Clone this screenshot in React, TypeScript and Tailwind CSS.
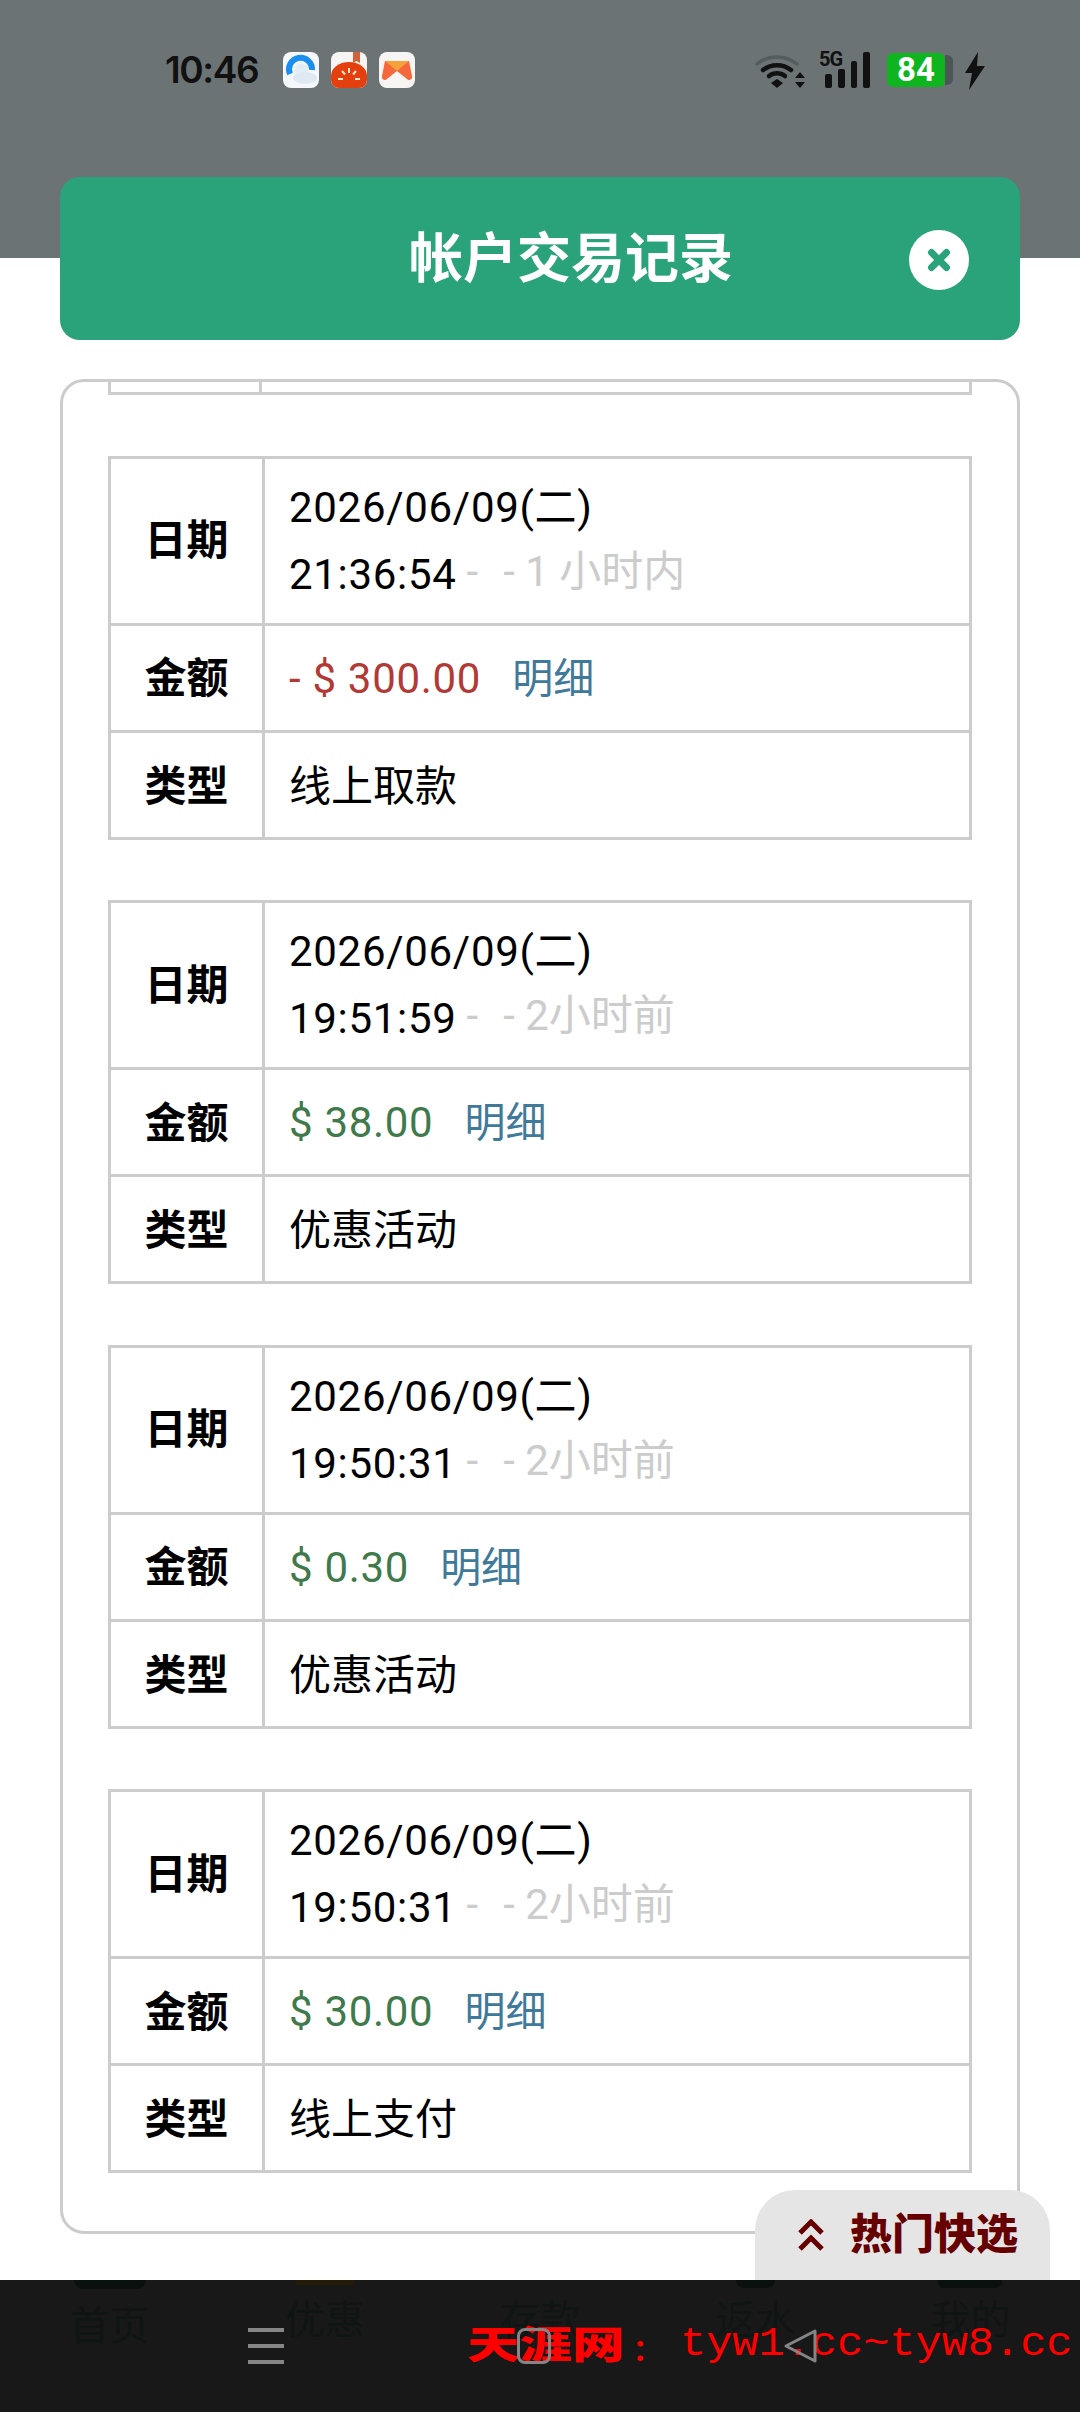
import React from 'react';
import { X } from 'lucide-react';

const FONT = "font-['Roboto','Noto_Sans_CJK_SC',sans-serif]";

type Record = { date: string; time: string; ago: string; amount: string; kind: string; tone: string };

const records: Record[] = [
  { date: '2026/06/09(二)', time: '21:36:54', ago: '- 1 小时内', amount: '- $ 300.00', kind: '线上取款', tone: 'text-[#b23a36]' },
  { date: '2026/06/09(二)', time: '19:51:59', ago: '- 2小时前', amount: '$ 38.00', kind: '优惠活动', tone: 'text-[#3f7a4c]' },
  { date: '2026/06/09(二)', time: '19:50:31', ago: '- 2小时前', amount: '$ 0.30', kind: '优惠活动', tone: 'text-[#3f7a4c]' },
  { date: '2026/06/09(二)', time: '19:50:31', ago: '- 2小时前', amount: '$ 30.00', kind: '线上支付', tone: 'text-[#3f7a4c]' },
];

const thClass = 'border-[3px] border-[#ccc] w-[154px] text-center font-bold text-[42px] text-black p-0';
const tdClass = 'border-[3px] border-[#ccc] pl-[24px] text-[42px] text-black p-0 text-left font-normal';

const RecordTable: React.FC<{ record: Record }> = ({ record }) => (
  <table className="w-full border-collapse table-fixed">
    <tbody>
      <tr className="h-[167px]">
        <th className={thClass}>日期</th>
        <td className={tdClass}>
          <div className="leading-[67px] tracking-[0.7px]">{record.date}</div>
          <div className="leading-[67px] tracking-[0.7px]">
            {record.time}
            <span className="relative -top-[3px] text-[#ccc] tracking-normal">
              <span className="ml-[10px]">-</span>
              <span className="ml-[25px]">{record.ago}</span>
            </span>
          </div>
        </td>
      </tr>
      <tr className="h-[107px]">
        <th className={`${thClass} pt-[2px]`}>金额</th>
        <td className={`${tdClass} pt-[2px]`}>
          <span className={`tracking-[0.7px] ${record.tone}`}>{record.amount}</span>
          <span className="ml-[31px] text-[41px] text-[#3f7a9b]">明细</span>
        </td>
      </tr>
      <tr className="h-[107px]">
        <th className={`${thClass} pt-[3px]`}>类型</th>
        <td className={`${tdClass} pt-[3px]`}>{record.kind}</td>
      </tr>
    </tbody>
  </table>
);

const StatusBar = () => (
  <div className="h-[177px] pt-[52px] pl-[165px] flex items-start">
    <span className="w-[118px] h-[36px] leading-[36px] text-[37px] font-semibold text-[#111] font-['Inter',sans-serif] tracking-[-1.400px]">10:46</span>
    <div className="flex gap-[12px]">
      <svg width="36" height="36" viewBox="0 0 36 36">
        <rect width="36" height="36" rx="8" fill="#f4f8fc" />
        <path d="M7 22a11.500 11.500 0 1 1 22-4" fill="none" stroke="#1b8ff0" strokeWidth="6" />
        <circle cx="18" cy="18" r="7" fill="#e3edf5" />
        <ellipse cx="22" cy="26" rx="12" ry="6" fill="#dfe9f2" />
      </svg>
      <svg width="36" height="36" viewBox="0 0 36 36">
        <rect width="36" height="36" rx="8" fill="#f7f5f3" />
        <path d="M0 24a18 14 0 0 1 36 0v4a8 8 0 0 1-8 8H8a8 8 0 0 1-8-8z" fill="#e4400f" />
        <path d="M22 0h7v11l-3.500-2-3.500 2z" fill="#d0633a" />
        <path d="M18 16v5M11 19l3 3.500M25 19l-3 3.500M7 27h5M24 27h5" stroke="#ffe9c8" strokeWidth="2" />
      </svg>
      <svg width="36" height="36" viewBox="0 0 36 36">
        <rect width="36" height="36" rx="8" fill="#f7f5f3" />
        <path d="M6 9h24l3 15a3 3 0 0 1-5 3l-10-8-10 8a3 3 0 0 1-5-3z" fill="#f4683c" />
        <path d="M6 9h24l-12 10z" fill="#f7a13a" />
      </svg>
    </div>
    <div className="ml-auto mr-[95px] flex items-start">
      <svg width="50" height="36" viewBox="0 0 50 36" fill="none" strokeLinecap="round">
        <path d="M2 12a32 32 0 0 1 40 0" stroke="#555c5d" strokeWidth="3.500" />
        <path d="M8 18a23 23 0 0 1 28 0" stroke="#111" strokeWidth="4.500" />
        <path d="M14 24a13 13 0 0 1 16 0" stroke="#111" strokeWidth="4.500" />
        <path d="M22 36l-6-5 6-4 6 4z" fill="#111" stroke="none" />
        <path d="M45 20l5 6H40zM45 36l5-6H40z" fill="#111" stroke="none" />
      </svg>
      <div className="relative ml-[14px] w-[51px] h-[36px] flex items-end gap-[6px] pl-[6px]">
        <span className="absolute left-0 -top-[3px] text-[20px] leading-[20px] font-bold text-[#111] font-['Roboto',sans-serif] tracking-[-1px]">5G</span>
        <span className="w-[7px] h-[14px] rounded-[2px] bg-[#111]" />
        <span className="w-[7px] h-[19px] rounded-[2px] bg-[#111]" />
        <span className="w-[7px] h-[27px] rounded-[2px] bg-[#111]" />
        <span className="w-[7px] h-[36px] rounded-[2px] bg-[#111]" />
      </div>
      <div className="ml-[17px] flex items-center h-[36px]">
        <div className="w-[58px] h-[34px] rounded-[6px] bg-[#0eb51e] text-white text-[33px] leading-[34px] font-bold text-center font-['Roboto',sans-serif]">84</div>
        <div className="w-[8px] h-[30px] rounded-r-[6px] bg-[#4e5556]" />
      </div>
      <svg className="ml-[12px]" width="20" height="38" viewBox="0 0 20 38">
        <path d="M13 0L0 21h7L4 38 20 14h-8z" fill="#111" />
      </svg>
    </div>
  </div>
);

const tabs = [
  { label: '首页', top: 'mt-[8px]', icon: 'w-[72px] h-[9px] rounded-b-[12px] bg-[#0a100e]' },
  { label: '优惠', top: 'mt-[6px]', icon: 'w-[58px] h-[5px] bg-[#241a08]' },
  { label: '存款', top: 'mt-[11px]', icon: 'w-[40px] h-0' },
  { label: '返水', top: 'mt-[3px]', icon: 'w-[39px] h-[8px] rounded-b-[18px] bg-[#0a100e]' },
  { label: '我的', top: 'mt-[3px]', icon: 'w-[64px] h-[8px] rounded-b-[6px] bg-[#0a100e]' },
];

const BottomBar = () => (
  <div className="relative z-10 h-[132px] bg-[#181818] overflow-hidden">
    <div className="grid grid-cols-5 px-[2px]">
      {tabs.map((tab) => (
        <div key={tab.label} className="flex flex-col items-center">
          <span className={`block ${tab.icon}`} />
          <span className={`text-[40px] text-[#0f1513] ${tab.top}`}>{tab.label}</span>
        </div>
      ))}
    </div>
    {/* red banner and soft keys lie over the faded tab labels */}
    <div className="absolute inset-x-0 top-[48px] h-[36px]">
      <div className="absolute left-[467px] -top-[7px] whitespace-nowrap flex items-center h-[48px] text-[#f00]">
        <div className="w-[168px]">
          <span className="inline-block origin-left scale-x-[1.38] text-[38px] font-black leading-[48px]">天涯网</span>
        </div>
        <span className="w-[45px] text-[36px] leading-[48px] font-bold pt-[8px]">:</span>
        <span className="inline-block origin-left scale-x-[1.09] text-[40px] leading-[48px] font-['Liberation_Mono',monospace]">tyw1.cc~tyw8.cc</span>
      </div>
      <div className="absolute left-[248px] top-0 w-[36px] h-[36px] flex flex-col justify-between">
        <span className="h-[4px] bg-[#858585]" />
        <span className="h-[4px] bg-[#858585]" />
        <span className="h-[4px] bg-[#858585]" />
      </div>
      <div className="absolute left-[517px] top-0 w-[34px] h-[36px] rounded-[8px] border-[3px] border-[#858585]" />
      <svg className="absolute left-[783px] top-0" width="34" height="36" viewBox="0 0 34 36" fill="none">
        <path d="M32 3v30L3 18z" stroke="#858585" strokeWidth="3" strokeLinejoin="round" />
      </svg>
    </div>
  </div>
);

const App: React.FC = () => (
  <div className={`relative w-[1080px] h-[2412px] bg-white overflow-hidden flex flex-col ${FONT}`}>
    <div className="absolute inset-x-0 top-0 h-[258px] bg-[#6b7374]" />
    <div className="relative flex-1 flex flex-col min-h-0">
      <StatusBar />
      <div className="mx-[60px] h-[163px] rounded-[20px] bg-[#2aa37b] flex items-center pl-[349px] pt-[2px]">
        <h1 className="text-[54px] font-semibold text-white leading-none">帐户交易记录</h1>
        <button className="ml-auto mr-[51px] w-[60px] h-[60px] rounded-full bg-white flex items-center justify-center">
          <X size={30} strokeWidth={5.500} color="#2aa37b" />
        </button>
      </div>
      <div className="mx-[60px] mt-[39px] h-[1855px] rounded-[24px] border-[3px] border-[#ccc] overflow-hidden px-[45px] flex flex-col gap-[60.500px]">
        <div className="h-[13px] shrink-0 border-x-[3px] border-b-[3px] border-[#ccc] flex">
          <div className="w-[151px] border-r-[3px] border-[#ccc]" />
        </div>
        {records.map((record, i) => (
          <RecordTable key={i} record={record} />
        ))}
      </div>
    </div>
    <BottomBar />
    {/* floating quick-pick tab */}
    <div className="absolute left-[755px] top-[2190px] w-[295px] h-[90px] rounded-t-[40px] bg-[#e5e5e5] flex items-center pl-[42px] text-[#660000]">
      <svg width="28" height="32" viewBox="0 0 28 32" fill="none" stroke="currentColor" strokeWidth="5">
        <path d="M3 14L14 3l11 11M3 30l11-11 11 11" />
      </svg>
      <span className="ml-[25px] text-[42px] font-black leading-none">热门快选</span>
    </div>
  </div>
);

export default App;
